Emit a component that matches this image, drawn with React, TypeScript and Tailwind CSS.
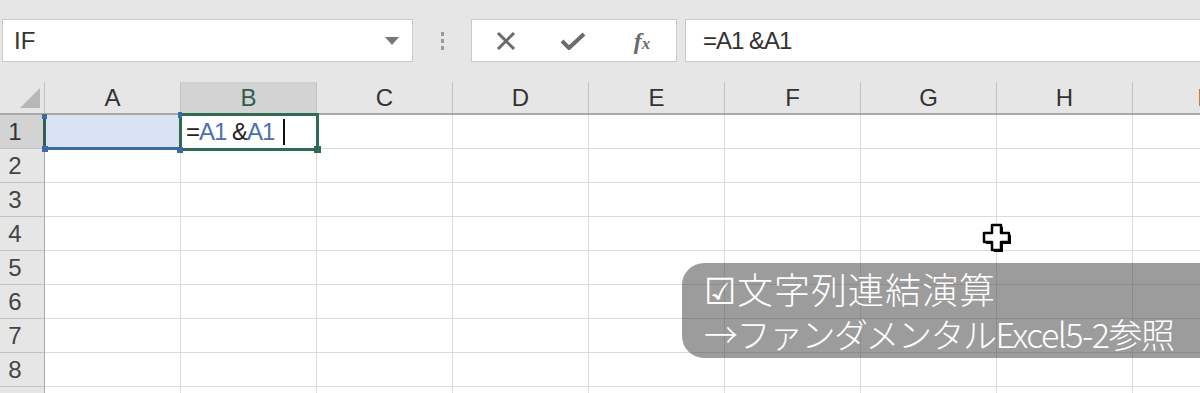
import React from 'react';

const COLS = ['A', 'B', 'C', 'D', 'E', 'F', 'G', 'H', 'I'];
const ROWS = [1, 2, 3, 4, 5, 6, 7, 8, 9];

function Cursor() {
  // Excel の白い十字カーソル
  return (
    <svg width="32" height="32" viewBox="0 0 32 32">
      <path d="M10 2h9v8h8v9h-8v8h-9v-8H2v-9h8z" fill="#000" transform="translate(2 2)" />
      <path d="M10 2h9v8h8v9h-8v8h-9v-8H2v-9h8z" fill="#fff" stroke="#000" strokeWidth="2.5" strokeLinejoin="round" />
    </svg>
  );
}

function Toolbar() {
  return (
    <div className="h-[82px] bg-[#e6e6e6] flex items-start pt-[19px]">
      <div className="ml-[2px] w-[411px] h-[43px] bg-white border border-[#c9c9c9] flex items-center justify-between pl-[11px] pr-[13px]">
        <span className="text-[24px] text-[#333] leading-none">IF</span>
        <svg width="14" height="8" viewBox="0 0 14 8">
          <path d="M0 0h14L7 8z" fill="#777" />
        </svg>
      </div>
      <div className="w-[58px] h-[43px] flex flex-col items-center justify-center gap-[3px]">
        <span className="w-[3px] h-[4px] bg-[#9a9a9a]" />
        <span className="w-[3px] h-[4px] bg-[#9a9a9a]" />
        <span className="w-[3px] h-[4px] bg-[#9a9a9a]" />
      </div>
      <div className="w-[206px] h-[43px] bg-white border border-[#c9c9c9] flex items-center">
        <div className="w-[66px] flex justify-center pl-[2px]">
          <svg width="20" height="18" viewBox="0 0 20 18">
            <path d="M2 1l16 16M18 1L2 17" stroke="#6b6b6b" strokeWidth="3" />
          </svg>
        </div>
        <div className="w-[70px] flex justify-center">
          <svg width="26" height="18" viewBox="0 0 26 18">
            <path d="M2 9l7 7L24 2" stroke="#6b6b6b" strokeWidth="4" fill="none" />
          </svg>
        </div>
        <div className="w-[68px] flex justify-center">
          <span className="font-['Liberation_Serif'] italic font-bold text-[24px] text-[#6b6b6b] leading-none">
            f<span className="text-[17px]">x</span>
          </span>
        </div>
      </div>
      <div className="ml-[8px] flex-1 h-[43px] bg-white border border-[#c9c9c9] border-r-0 flex items-center pl-[17px]">
        <span className="text-[24px] text-[#333] leading-none tracking-[-1px]">=A1 &amp;A1</span>
      </div>
    </div>
  );
}

function HeaderRow() {
  return (
    <div className="flex h-[33px] border-b-2 border-[#a9a9a9] bg-[#e6e6e6]">
      <div className="w-[45px] shrink-0 border-r border-[#c2c2c2] relative">
        <svg className="absolute left-[20px] top-[6px]" width="20" height="20" viewBox="0 0 20 20">
          <path d="M20 0v20H0z" fill="#b7b7b7" />
        </svg>
      </div>
      {COLS.map(c => (
        <div
          key={c}
          className={`w-[136px] shrink-0 border-r border-[#c2c2c2] flex items-center justify-center text-[24px] leading-none ${
            c === 'B' ? 'bg-[#d3d3d3] text-[#2e5f4e]' : 'text-[#333]'
          }`}
        >
          {c}
        </div>
      ))}
    </div>
  );
}

function Row({ n }: { n: number }) {
  const active = n === 1;
  return (
    <div className="flex h-[34px]">
      <div
        className={`w-[45px] shrink-0 border-b border-[#c2c2c2] border-r border-r-[#a9a9a9] flex items-center justify-start pl-[6px] text-[24px] leading-none ${
          active ? 'bg-[#d3d3d3] text-[#333]' : 'bg-[#e6e6e6] text-[#444]'
        }`}
      >
        {n < 9 && <span className="w-[18px] text-center">{n}</span>}
      </div>
      {COLS.map(c => {
        if (active && c === 'A') {
          return (
            <div key={c} className="w-[136px] shrink-0 border-r border-b border-[#dadada] relative">
              <div className="absolute left-[-2px] right-[0px] top-[0px] bottom-[-2px] bg-[#d9e3f3] border-l-[3px] border-l-[#2f5f55] border-b-[3px] border-b-[#3e6aa3]" />
              <span className="absolute left-[-3px] top-[-1px] w-[5px] h-[5px] bg-[#3e6aa3]" />
              <span className="absolute left-[-3px] bottom-[-4px] w-[6px] h-[6px] bg-[#3e6aa3]" />
            </div>
          );
        }
        if (active && c === 'B') {
          return (
            <div key={c} className="w-[136px] shrink-0 border-r border-b border-[#dadada] relative">
              <div className="absolute left-[-2px] right-[-3px] top-[-2px] bottom-[-3px] border-[3px] border-[#2f6b50] bg-white flex items-center pl-[4px]">
                <span className="text-[24px] leading-none tracking-[-1px] text-[#222]">
                  =<span className="text-[#4a6fb0]">A1</span> &amp;<span className="text-[#4a6fb0]">A1</span>
                </span>
                <span className="ml-[9px] w-[2px] h-[26px] bg-[#111]" />
              </div>
              <span className="absolute left-[-4px] bottom-[-5px] w-[6px] h-[6px] bg-[#3e6aa3]" />
              <span className="absolute left-[-3px] top-[-3px] w-[4px] h-[6px] bg-[#3e6aa3]" />
              <span className="absolute right-[-5px] bottom-[-5px] w-[7px] h-[7px] bg-[#2f6b50]" />
            </div>
          );
        }
        return <div key={c} className="w-[136px] shrink-0 border-r border-b border-[#dadada]" />;
      })}
    </div>
  );
}

export default function App() {
  return (
    <div className="w-[1200px] h-[393px] overflow-hidden relative bg-white font-['Liberation_Sans',sans-serif]">
      <Toolbar />
      <div className="overflow-hidden">
        <HeaderRow />
        {ROWS.map(n => (
          <Row key={n} n={n} />
        ))}
      </div>

      <div className="absolute left-[982px] top-[223px]">
        <Cursor />
      </div>

      <div className="absolute left-[682px] top-[263px] right-0 h-[95px] rounded-l-[22px] bg-[rgba(85,85,85,0.58)] pl-[22px] pt-[2px] text-white font-light font-['Noto_Sans_CJK_JP',sans-serif]">
        <div className="text-[36px] leading-[46px] tracking-[1px]">☑文字列連結演算</div>
        <div className="text-[34px] leading-[46px] tracking-[-1.5px]">→ファンダメンタルExcel5-2参照</div>
      </div>
    </div>
  );
}
